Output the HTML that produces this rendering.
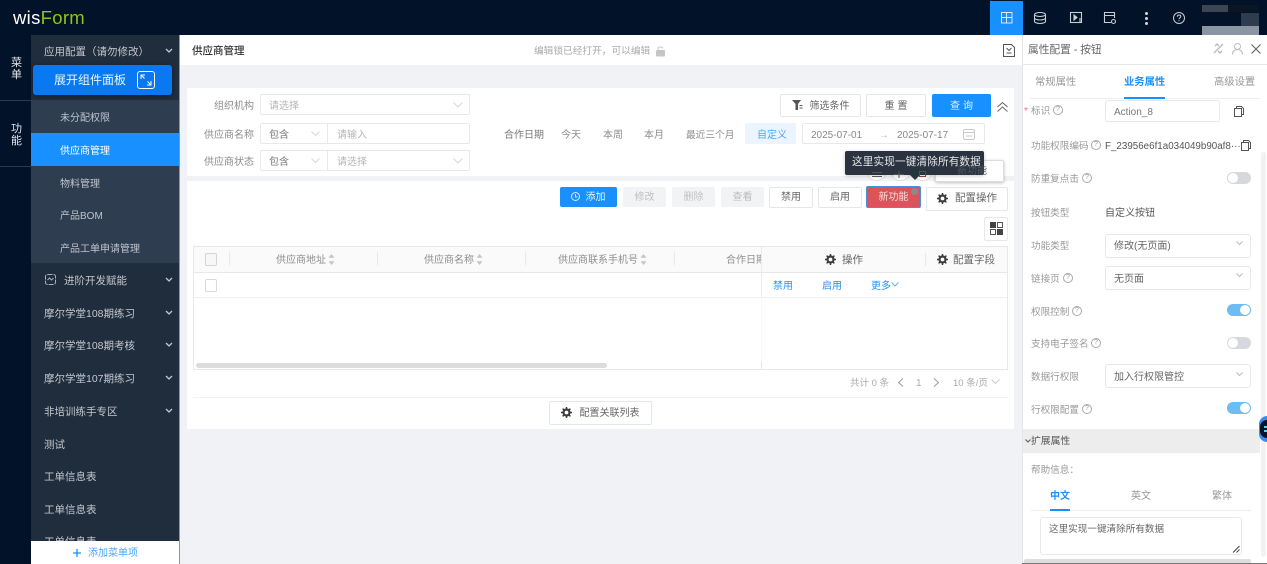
<!DOCTYPE html>
<html lang="zh"><head><meta charset="utf-8"><title>供应商管理</title>
<style>
*{box-sizing:border-box}
html,body{margin:0;padding:0}
body{width:1267px;height:564px;overflow:hidden;position:relative;background:#f0f2f5;font-family:"Liberation Sans","Noto Sans CJK SC",sans-serif;font-size:10px;color:#666}
#r{position:absolute;left:0;top:0;width:1267px;height:564px;overflow:hidden;filter:blur(.3px)}
.b{position:absolute}
.t{position:absolute;white-space:nowrap;line-height:14px;height:14px}
.box{position:absolute;background:#fff;border:1px solid #e6e8ea;border-radius:2px}
.btn{position:absolute;background:#fff;border:1px solid #e4e6e8;border-radius:2px;text-align:center;white-space:nowrap;color:#666;font-size:10px}
.m{color:#c3c8ce;font-size:10.5px;left:44px}
.sub{color:#bcc3cc;font-size:10px;left:60px}
svg{position:absolute;overflow:visible}
.g{color:#8d8d8d;font-size:10px}
.l{color:#999;font-size:9.6px;left:1031px}
.q{position:absolute;width:10px;height:10px;border:1px solid #aaa;border-radius:50%;font-size:7px;line-height:8px;text-align:center;color:#999}
.sw{position:absolute;left:1227px;width:24px;height:12px;border-radius:6px;background:#d6d8de}
.sw:after{content:"";position:absolute;left:1px;top:1px;width:10px;height:10px;border-radius:50%;background:#fff}
.sw.on{background:#6cbcf5}
.sw.on:after{left:13px}
</style></head><body><div id="r">

<!-- Top bar -->
<div class="b" style="left:0;top:0;width:1267px;height:35px;background:#021228"></div>
<div class="t" style="left:13px;top:7px;height:22px;line-height:22px;font-size:18.500px;color:#fff;letter-spacing:.3px">wis<span style="color:#8fc31f">Form</span></div>

<div class="b" style="left:990px;top:1px;width:33px;height:34px;background:#1890ff"></div>
<svg style="left:1001px;top:12px" width="12" height="12" fill="none" stroke="#d5e9ff" stroke-width="1"><rect x=".5" y=".5" width="10.500" height="10.500"/><path d="M.5 5.500h10.500M5.500.5v10.500"/></svg>
<svg style="left:1034px;top:12px" width="12" height="12" fill="none" stroke="#c8ced5" stroke-width="1.100"><ellipse cx="6" cy="2.500" rx="5.500" ry="2"/><path d="M.5 2.500v7c0 1.100 2.500 2 5.500 2s5.500-.9 5.500-2v-7M.5 6c0 1.100 2.500 2 5.500 2s5.500-.9 5.500-2"/></svg>
<svg style="left:1070px;top:12px" width="12" height="12" fill="none" stroke="#c8ced5" stroke-width="1.100"><rect x=".5" y=".5" width="11" height="10"/><path d="M4 3l3 2.500-3 2.500z" fill="#c8ced5"/><path d="M10 6v5"/></svg>
<svg style="left:1104px;top:12px" width="12" height="12" fill="none" stroke="#c8ced5" stroke-width="1.100"><path d="M7 10.500H.5v-10h10V6M.5 3.500h10"/><circle cx="9.500" cy="9.500" r="2"/></svg>
<div class="b" style="left:1145px;top:12px;width:3px;height:3px;border-radius:50%;background:#d4d8dd;box-shadow:0 5px 0 #d4d8dd,0 10px 0 #d4d8dd"></div>
<svg style="left:1173px;top:12px" width="12" height="12" fill="none" stroke="#c8ced5"><circle cx="6" cy="6" r="5.500"/><path d="M4.300 4.700c0-2.300 3.500-2.300 3.500-.2 0 1.300-1.800 1.300-1.800 2.700M6 8.200v1"/></svg>
<div class="b" style="left:1202px;top:5px;width:26px;height:7px;background:#3c4552"></div>
<div class="b" style="left:1228px;top:5px;width:31px;height:7px;background:#0b1625"></div>
<div class="b" style="left:1241px;top:13px;width:18px;height:13px;background:#2e3c4e"></div>
<div class="b" style="left:1202px;top:26px;width:57px;height:9px;background:#8a95a2"></div>

<!-- Left rail -->
<div class="b" style="left:0;top:35px;width:31px;height:529px;background:#021228"></div>
<div class="b" style="left:0;top:100px;width:31px;height:1px;background:#2a3a4d"></div>
<div class="b" style="left:0;top:166px;width:31px;height:1px;background:#2a3a4d"></div>
<div class="t" style="left:11px;top:57px;width:11px;height:26px;line-height:12px;white-space:normal;color:#e6e9ec;font-size:11px">菜单</div>
<div class="t" style="left:11px;top:123px;width:11px;height:26px;line-height:12px;white-space:normal;color:#e6e9ec;font-size:11px">功能</div>

<!-- Sidebar -->
<div class="b" style="left:31px;top:35px;width:149px;height:529px;background:#202d3c"></div>
<div class="b" style="left:31px;top:100px;width:149px;height:163px;background:#2f3d51"></div>
<div class="b" style="left:31px;top:133px;width:149px;height:33px;background:#1890ff"></div>
<div class="b" style="left:179px;top:35px;width:1px;height:529px;background:#8d97a3"></div>
<div class="t m" style="top:45px">应用配置（请勿修改）</div>
<div class="b" style="left:33px;top:65px;width:139px;height:30px;background:#0a78f0;border-radius:3px;box-shadow:0 1px 5px rgba(0,0,0,.35)"></div>
<div class="t" style="left:54px;top:72px;height:16px;line-height:16px;font-size:12px;color:#eaf4ff">展开组件面板</div>
<svg style="left:137px;top:71px" width="18" height="18" fill="none" stroke="#fff"><rect x=".5" y=".5" width="17" height="17" rx="2.500"/><path d="M4 8V4h4M4 4l3.500 3.500M14 10v4h-4M14 14l-3.500-3.500"/></svg>
<div class="t sub" style="top:112px">未分配权限</div>
<div class="t sub" style="top:145px;color:#fff">供应商管理</div>
<div class="t sub" style="top:178px">物料管理</div>
<div class="t sub" style="top:210px">产品BOM</div>
<div class="t sub" style="top:243px">产品工单申请管理</div>
<svg style="left:45px;top:274px" width="12" height="12" fill="none" stroke="#aab2bc" stroke-dasharray="5 1"><rect x=".5" y=".5" width="10" height="10" rx="2"/><path d="M2.500 6l2-2 2 2 2-2" stroke-dasharray="none"/></svg>
<div class="t m" style="left:64px;top:274px">进阶开发赋能</div>
<div class="t m" style="top:307px">摩尔学堂108期练习</div>
<div class="t m" style="top:339px">摩尔学堂108期考核</div>
<div class="t m" style="top:372px">摩尔学堂107期练习</div>
<div class="t m" style="top:405px">非培训练手专区</div>
<div class="t m" style="top:438px">测试</div>
<div class="t m" style="top:470px">工单信息表</div>
<div class="t m" style="top:503px">工单信息表</div>
<div class="t m" style="top:535px">工单信息表</div>
<svg style="left:165px;top:48px" width="8" height="6" fill="none" stroke="#c3c8ce" stroke-width="1.300"><path d="M1 1l3 3 3-3"/></svg>
<svg style="left:165px;top:277px" width="8" height="6" fill="none" stroke="#c3c8ce" stroke-width="1.300"><path d="M1 1l3 3 3-3"/></svg>
<svg style="left:165px;top:310px" width="8" height="6" fill="none" stroke="#c3c8ce" stroke-width="1.300"><path d="M1 1l3 3 3-3"/></svg>
<svg style="left:165px;top:342px" width="8" height="6" fill="none" stroke="#c3c8ce" stroke-width="1.300"><path d="M1 1l3 3 3-3"/></svg>
<svg style="left:165px;top:375px" width="8" height="6" fill="none" stroke="#c3c8ce" stroke-width="1.300"><path d="M1 1l3 3 3-3"/></svg>
<svg style="left:165px;top:408px" width="8" height="6" fill="none" stroke="#c3c8ce" stroke-width="1.300"><path d="M1 1l3 3 3-3"/></svg>
<div class="b" style="left:31px;top:541px;width:148px;height:23px;background:#fff"></div>
<svg style="left:73px;top:549px" width="8" height="8" fill="none" stroke="#1890ff" stroke-width="1.300"><path d="M4 0v8M0 4h8"/></svg>
<div class="t" style="left:88px;top:547px;color:#4fa6f5;font-size:10px">添加菜单项</div>

<!-- Page header -->
<div class="b" style="left:180px;top:35px;width:842px;height:30px;background:#fff"></div>
<div class="t" style="left:192px;top:44px;color:#333;font-size:10.500px;font-weight:500">供应商管理</div>
<div class="t" style="left:534px;top:45px;color:#aaa;font-size:9.700px">编辑锁已经打开，可以编辑</div>
<svg style="left:656px;top:46px" width="10" height="11" fill="none"><rect x="0" y="4" width="9" height="6.500" rx="1" fill="#c5c5c5"/><path d="M2 4V2.500C2 .5 6.500 .5 7 2.500" stroke="#c5c5c5"/></svg>
<svg style="left:1003px;top:44px" width="12" height="13" fill="none" stroke="#555"><path d="M.5.5h8l3 3v9h-11zM3.500 4l2.500 2.500L8.500 4M3.500 9h5"/></svg>

<!-- Filter card -->
<div class="b" style="left:187px;top:88px;width:827px;height:88px;background:#fff"></div>
<div class="t g" style="left:214px;top:100px">组织机构</div>
<div class="box" style="left:260px;top:94px;width:210px;height:21px"></div>
<div class="t" style="left:269px;top:100px;color:#b5b5b5">请选择</div>
<svg style="left:453px;top:102px" width="10" height="6" fill="none" stroke="#d8d8d8"><path d="M.5.5l4.500 4.500L9.500.5"/></svg>
<div class="t g" style="left:204px;top:129px">供应商名称</div>
<div class="box" style="left:260px;top:123px;width:210px;height:21px"></div>
<div class="b" style="left:327px;top:123px;width:1px;height:21px;background:#e6e8ea"></div>
<div class="t" style="left:269px;top:129px;color:#777">包含</div>
<svg style="left:311px;top:131px" width="9" height="6" fill="none" stroke="#d8d8d8"><path d="M.5.5l4 4 4-4"/></svg>
<div class="t" style="left:337px;top:129px;color:#b5b5b5">请输入</div>
<div class="t g" style="left:204px;top:156px">供应商状态</div>
<div class="box" style="left:260px;top:150px;width:210px;height:21px"></div>
<div class="b" style="left:327px;top:150px;width:1px;height:21px;background:#e6e8ea"></div>
<div class="t" style="left:269px;top:156px;color:#777">包含</div>
<svg style="left:311px;top:158px" width="9" height="6" fill="none" stroke="#d8d8d8"><path d="M.5.5l4 4 4-4"/></svg>
<div class="t" style="left:337px;top:156px;color:#b5b5b5">请选择</div>
<svg style="left:453px;top:158px" width="10" height="6" fill="none" stroke="#d8d8d8"><path d="M.5.5l4.500 4.500L9.500.5"/></svg>

<div class="t g" style="left:504px;top:129px;color:#777">合作日期</div>
<div class="t g" style="left:561px;top:129px">今天</div>
<div class="t g" style="left:603px;top:129px">本周</div>
<div class="t g" style="left:644px;top:129px">本月</div>
<div class="t g" style="left:686px;top:129px;font-size:9.700px">最近三个月</div>
<div class="b" style="left:745px;top:123px;width:51px;height:21px;background:#ecf5ff"></div>
<div class="t" style="left:757px;top:129px;color:#4fa6f5">自定义</div>
<div class="box" style="left:802px;top:123px;width:183px;height:21px"></div>
<div class="t" style="left:811px;top:129px;color:#888;font-size:10px">2025-07-01</div>
<div class="t" style="left:879px;top:129px;color:#bbb;font-size:10px">→</div>
<div class="t" style="left:897px;top:129px;color:#888;font-size:10px">2025-07-17</div>
<svg style="left:963px;top:128px" width="12" height="12" fill="none" stroke="#c8c8c8"><rect x=".5" y="1.500" width="11" height="10" rx="1.500"/><path d="M.5 4.500h11M3 8h6"/></svg>

<div class="btn" style="left:780px;top:94px;width:81px;height:23px;line-height:23px;padding-left:18px">筛选条件</div>
<svg style="left:792px;top:100px" width="12" height="10" fill="#555"><path d="M0 0h9L6 4v6H3.500V4zM7.500 5h3v1h-3zM7.500 7.500h3v1h-3z"/></svg>
<div class="btn" style="left:866px;top:94px;width:60px;height:23px;line-height:23px;letter-spacing:3px;padding-left:3px">重置</div>
<div class="btn" style="left:932px;top:94px;width:59px;height:23px;line-height:23px;background:#1890ff;border-color:#1890ff;color:#e2f0ff;letter-spacing:3px;padding-left:3px">查询</div>
<svg style="left:997px;top:102px" width="11" height="10" fill="none" stroke="#666"><path d="M.5 5L5.500.5l5 4.500M.5 9.500L5.500 5l5 4.500"/></svg>

<!-- Table card -->
<div class="b" style="left:187px;top:181px;width:827px;height:248px;background:#fff"></div>
<div class="btn" style="left:560px;top:187px;width:57px;height:20px;line-height:21px;background:#1890ff;border:0;color:#eaf4ff;padding-left:14px">添加</div>
<svg style="left:571px;top:192px" width="9" height="9" fill="none" stroke="#d8ebff"><circle cx="4.500" cy="4.500" r="4"/><path d="M4.500 2v3h2"/></svg>
<div class="btn" style="left:623px;top:187px;width:43px;height:20px;line-height:20px;background:#f2f3f5;border-color:#f2f3f5;color:#c0c0c0">修改</div>
<div class="btn" style="left:672px;top:187px;width:43px;height:20px;line-height:20px;background:#f2f3f5;border-color:#f2f3f5;color:#c0c0c0">删除</div>
<div class="btn" style="left:721px;top:187px;width:43px;height:20px;line-height:20px;background:#f2f3f5;border-color:#f2f3f5;color:#bbb">查看</div>
<div class="btn" style="left:769px;top:187px;width:44px;height:21px;line-height:19px">禁用</div>
<div class="btn" style="left:818px;top:187px;width:44px;height:21px;line-height:19px">启用</div>

<!-- toolbar behind tooltip -->
<div class="b" style="left:866px;top:160px;width:21px;height:21px;border:1px solid #ddd;border-radius:50%;background:#fff"></div>
<div class="b" style="left:890px;top:160px;width:21px;height:21px;border:1px solid #ddd;border-radius:50%;background:#fff"></div>
<div class="b" style="left:912px;top:160px;width:21px;height:21px;border:1px solid #ddd;border-radius:50%;background:#fff"></div>
<div class="b" style="left:935px;top:160px;width:69px;height:22px;background:#fff;border:1px solid #ddd;border-radius:2px;box-shadow:0 1px 3px rgba(0,0,0,.25)"></div>
<div class="b" style="left:845px;top:151px;width:139px;height:24px;background:#2a333f;border-radius:2px;box-shadow:0 1px 4px rgba(0,0,0,.2)"></div>
<div class="b" style="left:910px;top:175px;width:0;height:0;border-left:5px solid transparent;border-right:5px solid transparent;border-top:5px solid #2a333f"></div>
<div class="t" style="left:852px;top:155px;color:#e8eaec;font-size:10.600px;letter-spacing:.15px">这里实现一键清除所有数据</div>
<div class="t" style="left:957px;top:165px;color:#4c5560">新功能</div>
<div class="b" style="left:872px;top:172px;width:10px;height:5px;border-top:1px solid #555;border-bottom:1px solid #555"></div>
<svg style="left:894px;top:171px" width="10" height="7" fill="none" stroke="#555"><path d="M5 0v7M0 3.500h10"/></svg>
<div class="b" style="left:919px;top:171px;width:7px;height:6px;border:1px solid #8a3a3a"></div>

<div class="btn" style="left:866px;top:186px;width:55px;height:22px;line-height:21px;background:#dc5457;border-color:#4a90e2;color:#f8dcdc;font-size:10px">新功能</div>
<div class="b" style="left:911px;top:188px;width:7px;height:7px;border-radius:50%;background:#8b8b8b"></div>
<div class="btn" style="left:926px;top:187px;width:82px;height:24px;line-height:20px;padding-left:18px;font-size:10.500px;color:#666">配置操作</div>
<svg style="left:937px;top:193px" width="11" height="11" fill="none" stroke="#3c3c3c" stroke-width="2.200"><circle cx="5.500" cy="5.500" r="3"/><path d="M5.500 0v2M5.500 9v2M0 5.500h2M9 5.500h2M1.600 1.600l1.400 1.400M8 8l1.400 1.400M9.400 1.600L8 3M3 8L1.600 9.400" stroke-width="1.500"/></svg>
<div class="box" style="left:984px;top:217px;width:24px;height:24px"></div>
<svg style="left:990px;top:222px" width="13" height="13"><rect width="6" height="6" fill="#444"/><rect x="7.500" y=".5" width="5" height="5" fill="none" stroke="#555"/><rect x=".5" y="7.500" width="5" height="5" fill="none" stroke="#555"/><rect x="7" y="7" width="6" height="6" fill="#444"/></svg>

<!-- Table -->
<div class="b" style="left:193px;top:246px;width:815px;height:124px;border:1px solid #e6e8ea;background:#fff"></div>
<div class="b" style="left:194px;top:247px;width:813px;height:26px;background:#fafafa;border-bottom:1px solid #e8e8e8"></div>
<div class="b" style="left:194px;top:297px;width:813px;height:1px;background:#f0f0f0"></div>
<div class="b" style="left:205px;top:253px;width:12px;height:13px;border:1px solid #d4d4d4;border-radius:2px;background:#f7f7f7"></div>
<div class="b" style="left:205px;top:279px;width:12px;height:13px;border:1px solid #d4dae0;border-radius:2px;background:#fff"></div>
<div class="b" style="left:229px;top:252px;width:1px;height:13px;background:#e8e8e8"></div>
<div class="b" style="left:377px;top:252px;width:1px;height:13px;background:#e8e8e8"></div>
<div class="b" style="left:525px;top:252px;width:1px;height:13px;background:#e8e8e8"></div>
<div class="b" style="left:674px;top:252px;width:1px;height:13px;background:#e8e8e8"></div>
<div class="t" style="left:276px;top:254px;color:#8f8f8f">供应商地址</div>
<div class="t" style="left:424px;top:254px;color:#8f8f8f">供应商名称</div>
<div class="t" style="left:558px;top:254px;color:#8f8f8f">供应商联系手机号</div>
<svg style="left:328px;top:254px" width="7" height="11" fill="#c4c4c4"><path d="M3.500 0l3 3.800h-6zM3.500 11L.5 7.200h6z"/></svg>
<svg style="left:476px;top:254px" width="7" height="11" fill="#c4c4c4"><path d="M3.500 0l3 3.800h-6zM3.500 11L.5 7.200h6z"/></svg>
<svg style="left:640px;top:254px" width="7" height="11" fill="#c4c4c4"><path d="M3.500 0l3 3.800h-6zM3.500 11L.5 7.200h6z"/></svg>
<div class="b" style="left:726px;top:254px;width:36px;height:14px;overflow:hidden;white-space:nowrap;line-height:14px;color:#8f8f8f">合作日期</div>
<div class="b" style="left:761px;top:247px;width:1px;height:50px;background:#ececec"></div>
<div class="b" style="left:761px;top:297px;width:1px;height:65px;background:#f8f8f8"></div>
<div class="b" style="left:761px;top:362px;width:1px;height:7px;background:#e8e8e8"></div>
<div class="b" style="left:925px;top:253px;width:1px;height:13px;background:#e8e8e8"></div>
<svg style="left:825px;top:254px" width="11" height="11" fill="none" stroke="#3c3c3c" stroke-width="2.200"><circle cx="5.500" cy="5.500" r="3"/><path d="M5.500 0v2M5.500 9v2M0 5.500h2M9 5.500h2M1.600 1.600l1.400 1.400M8 8l1.400 1.400M9.400 1.600L8 3M3 8L1.600 9.400" stroke-width="1.500"/></svg>
<div class="t" style="left:842px;top:253px;color:#666;font-size:10.500px">操作</div>
<svg style="left:937px;top:254px" width="11" height="11" fill="none" stroke="#3c3c3c" stroke-width="2.200"><circle cx="5.500" cy="5.500" r="3"/><path d="M5.500 0v2M5.500 9v2M0 5.500h2M9 5.500h2M1.600 1.600l1.400 1.400M8 8l1.400 1.400M9.400 1.600L8 3M3 8L1.600 9.400" stroke-width="1.500"/></svg>
<div class="t" style="left:953px;top:253px;color:#666;font-size:10.500px">配置字段</div>
<div class="t" style="left:773px;top:280px;color:#2b90f0">禁用</div>
<div class="t" style="left:822px;top:280px;color:#2b90f0">启用</div>
<div class="t" style="left:871px;top:280px;color:#2b90f0">更多</div>
<svg style="left:891px;top:282px" width="8" height="6" fill="none" stroke="#6aaef2"><path d="M.5.5l3.500 3.500L7.500.5"/></svg>
<div class="b" style="left:196px;top:363px;width:411px;height:5px;background:#dcdcdc;border-radius:3px"></div>
<div class="t" style="left:850px;top:377px;color:#aaa;font-size:9.500px">共计 0 条</div>
<svg style="left:897px;top:378px" width="7" height="9" fill="none" stroke="#999"><path d="M6 .5L1.500 4.500 6 8.500"/></svg>
<div class="t" style="left:916px;top:377px;color:#aaa">1</div>
<svg style="left:933px;top:378px" width="7" height="9" fill="none" stroke="#999"><path d="M1 .5l4.500 4L1 8.500"/></svg>
<div class="t" style="left:953px;top:377px;color:#aaa;font-size:9.500px">10 条/页</div>
<svg style="left:991px;top:379px" width="9" height="6" fill="none" stroke="#ccc"><path d="M.5.500l4 4 4-4"/></svg>
<div class="b" style="left:193px;top:397px;width:815px;height:1px;background:#f2f2f2"></div>
<div class="btn" style="left:549px;top:401px;width:103px;height:24px;line-height:23px;padding-left:18px;font-size:10px">配置关联列表</div>
<svg style="left:561px;top:407px" width="11" height="11" fill="none" stroke="#3c3c3c" stroke-width="2.200"><circle cx="5.500" cy="5.500" r="3"/><path d="M5.500 0v2M5.500 9v2M0 5.500h2M9 5.500h2M1.600 1.600l1.400 1.400M8 8l1.400 1.400M9.400 1.600L8 3M3 8L1.600 9.400" stroke-width="1.500"/></svg>

<!-- Right panel -->
<div class="b" style="left:1022px;top:35px;width:245px;height:529px;background:#fff;border-left:1px solid #e4e6ea"></div>
<div class="b" style="left:1022px;top:64px;width:245px;height:1px;background:#e8e8e8"></div>
<div class="t" style="left:1028px;top:43px;color:#666;font-size:10.700px">属性配置 - 按钮</div>
<svg style="left:1213px;top:43px" width="11" height="11" fill="none" stroke="#bbb" stroke-width="1.400"><path d="M1 10l9-9M2 3l2-2 2 2M9 8l-2 2-2-2"/></svg>
<svg style="left:1232px;top:43px" width="11" height="12" fill="none" stroke="#bbb"><circle cx="5.500" cy="3.500" r="3"/><path d="M.5 11.500c0-3 2-5 5-5s5 2 5 5"/></svg>
<svg style="left:1251px;top:44px" width="10" height="10" fill="none" stroke="#666" stroke-width="1.200"><path d="M.5.5l9 9M9.500.5l-9 9"/></svg>
<div class="t" style="left:1035px;top:76px;color:#999;font-size:10.300px">常规属性</div>
<div class="t" style="left:1124px;top:76px;color:#1890ff;font-size:10.300px;font-weight:700">业务属性</div>
<div class="t" style="left:1214px;top:76px;color:#999;font-size:10.300px">高级设置</div>
<div class="b" style="left:1030px;top:98px;width:230px;height:1px;background:#eee"></div>
<div class="b" style="left:1124px;top:97px;width:41px;height:2px;background:#1890ff"></div>
<div class="b" style="left:1261px;top:152px;width:5px;height:405px;background:#f2f2f2;border-radius:3px"></div>

<div class="t" style="left:1024px;top:105px;color:#f56c6c;font-size:10px">*</div>
<div class="t l" style="top:105px">标识</div><div class="q" style="left:1053px;top:105px">?</div>
<div class="box" style="left:1105px;top:100px;width:115px;height:22px;border-radius:3px"></div>
<div class="t" style="left:1114px;top:106px;color:#777;font-size:10px">Action_8</div>
<svg style="left:1234px;top:106px" width="10" height="11" fill="none" stroke="#555"><path d="M2.500 2.500V.5h5l2 2v6h-2M.5 2.500h7v8h-7z"/></svg>

<div class="t l" style="top:140px">功能权限编码</div><div class="q" style="left:1091px;top:140px">?</div>
<div class="t" style="left:1105px;top:140px;color:#555;font-size:9.800px;width:135px;overflow:hidden">F_23956e6f1a034049b90af8···</div>
<svg style="left:1241px;top:140px" width="10" height="11" fill="none" stroke="#555"><path d="M2.500 2.500V.5h5l2 2v6h-2M.5 2.500h7v8h-7z"/></svg>

<div class="t l" style="top:173px">防重复点击</div><div class="q" style="left:1082px;top:173px">?</div>
<div class="sw" style="top:172px"></div>
<div class="t l" style="top:207px">按钮类型</div>
<div class="t" style="left:1105px;top:207px;color:#555">自定义按钮</div>
<div class="t l" style="top:240px">功能类型</div>
<div class="box" style="left:1105px;top:234px;width:146px;height:24px;border-radius:3px"></div>
<div class="t" style="left:1114px;top:240px;color:#666">修改(无页面)</div>
<svg style="left:1236px;top:241px" width="7" height="5" fill="none" stroke="#bbb"><path d="M.5.500l3 3 3-3"/></svg>
<div class="t l" style="top:273px">链接页</div><div class="q" style="left:1063px;top:273px">?</div>
<div class="box" style="left:1105px;top:266px;width:146px;height:24px;border-radius:3px"></div>
<div class="t" style="left:1114px;top:273px;color:#666">无页面</div>
<svg style="left:1236px;top:273px" width="7" height="5" fill="none" stroke="#bbb"><path d="M.5.500l3 3 3-3"/></svg>
<div class="t l" style="top:306px">权限控制</div><div class="q" style="left:1072px;top:306px">?</div>
<div class="sw on" style="top:304px"></div>
<div class="t l" style="top:338px">支持电子签名</div><div class="q" style="left:1091px;top:338px">?</div>
<div class="sw" style="top:337px"></div>
<div class="t l" style="top:371px">数据行权限</div>
<div class="box" style="left:1105px;top:364px;width:146px;height:24px;border-radius:3px"></div>
<div class="t" style="left:1114px;top:371px;color:#666">加入行权限管控</div>
<svg style="left:1236px;top:372px" width="7" height="5" fill="none" stroke="#bbb"><path d="M.5.500l3 3 3-3"/></svg>
<div class="t l" style="top:404px">行权限配置</div><div class="q" style="left:1082px;top:404px">?</div>
<div class="sw on" style="top:402px"></div>

<div class="b" style="left:1023px;top:429px;width:237px;height:24px;background:#ededed"></div>
<svg style="left:1025px;top:439px" width="6" height="4" fill="none" stroke="#555"><path d="M.5.500L3 3 5.500.5"/></svg>
<div class="t" style="left:1031px;top:435px;color:#555;font-size:9.800px">扩展属性</div>
<div class="b" style="left:1259px;top:416px;width:8px;height:26px;background:#3a8af0;border-radius:8px 0 0 8px"></div>
<div class="b" style="left:1260px;top:420px;width:7px;height:18px;background:#06162a;border-radius:7px 0 0 7px"></div>
<div class="b" style="left:1264px;top:426px;width:3px;height:1.500px;background:#5fd0e8;box-shadow:0 4px 0 #5fd0e8"></div>

<div class="t l" style="top:464px">帮助信息：</div>
<div class="t" style="left:1050px;top:490px;color:#1890ff;font-weight:700">中文</div>
<div class="t" style="left:1131px;top:490px;color:#999">英文</div>
<div class="t" style="left:1212px;top:490px;color:#999">繁体</div>
<div class="b" style="left:1031px;top:510px;width:220px;height:1px;background:#eee"></div>
<div class="b" style="left:1050px;top:509px;width:20px;height:2px;background:#1890ff"></div>
<div class="box" style="left:1040px;top:517px;width:202px;height:38px;border-radius:3px"></div>
<div class="t" style="left:1049px;top:523px;color:#666;font-size:9.600px">这里实现一键清除所有数据</div>
<svg style="left:1233px;top:546px" width="7" height="7" fill="none" stroke="#444"><path d="M0 6.500L6.500 0M3.500 6.500l3-3"/></svg>
<div class="b" style="left:1024px;top:559px;width:227px;height:5px;background:#dedede;border-radius:2px"></div>
<div class="b" style="left:1022px;top:563px;width:245px;height:1px;background:#777"></div>

</div></body></html>
